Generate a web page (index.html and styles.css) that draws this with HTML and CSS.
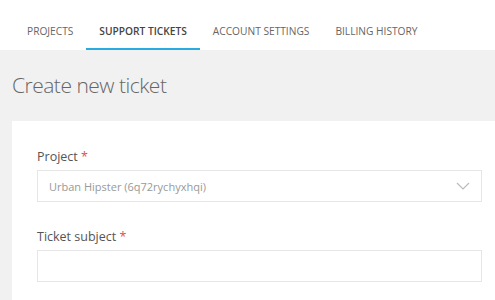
FILE: index.html
```html
<!DOCTYPE html>
<html lang="en">
<head>
    <meta charset="UTF-8">
    <title>Create new ticket</title>
    <link rel="stylesheet" href="styles.css">
</head>
<body>
    <nav class="tabs">
        <a class="tab">Projects</a>
        <a class="tab active">Support tickets</a>
        <a class="tab">Account settings</a>
        <a class="tab">Billing history</a>
    </nav>

    <main class="page">
        <h1 class="page-title">Create new ticket</h1>

        <div class="card">
            <div class="field">
                <label class="label">Project <span class="req">*</span></label>
                <div class="select">
                    <span class="select-value">Urban Hipster (6q72rychyxhqi)</span>
                    <svg class="chevron" width="14" height="8" viewBox="0 0 14 8">
                        <path d="M1 1 L7 7 L13 1" fill="none" stroke="#bbb" stroke-width="1.2"/>
                    </svg>
                </div>
            </div>
            <div class="field">
                <label class="label">Ticket subject <span class="req">*</span></label>
                <div class="input"></div>
            </div>
        </div>
    </main>
</body>
</html>
```

FILE: styles.css
```css
body {
    margin: 0;
    font-family: "Open Sans", "Noto Sans", sans-serif;
    background-color: #f1f1f1;
    height: 300px;
    overflow: hidden;
}

.tabs {
    display: flex;
    background-color: #fff;
    height: 50px;
    padding-left: 14px;
}

.tab {
    display: flex;
    align-items: center;
    padding: 14px 13px 0;
    font-size: 10.2px;
    text-transform: uppercase;
    color: #666;
    border-bottom: 2px solid transparent;
    box-sizing: border-box;
    height: 50px;
}

.tab.active {
    color: #444;
    font-weight: 600;
    border-bottom-color: #29abe2;
}

.page {
    padding-left: 12px;
}

.page-title {
    margin: 0;
    padding-top: 22px;
    height: 71px;
    box-sizing: border-box;
    font-size: 21px;
    line-height: 26px;
    font-weight: 300;
    color: #666;
    letter-spacing: -0.5px;
}

.card {
    background-color: #fff;
    padding: 27px 13px 19px 25px;
}

.field {
    margin-bottom: 26px;
}

.field:last-child {
    margin-bottom: 0;
}

.label {
    display: block;
    font-size: 12.5px;
    color: #555;
    margin-bottom: 5px;
}

.req {
    color: #d9534f;
}

.select,
.input {
    height: 32px;
    border: 1px solid #e6e6e6;
    box-sizing: border-box;
}

.select {
    display: flex;
    align-items: center;
    justify-content: space-between;
    padding: 0 11px;
}

.select-value {
    font-size: 11px;
    color: #999;
}
```
